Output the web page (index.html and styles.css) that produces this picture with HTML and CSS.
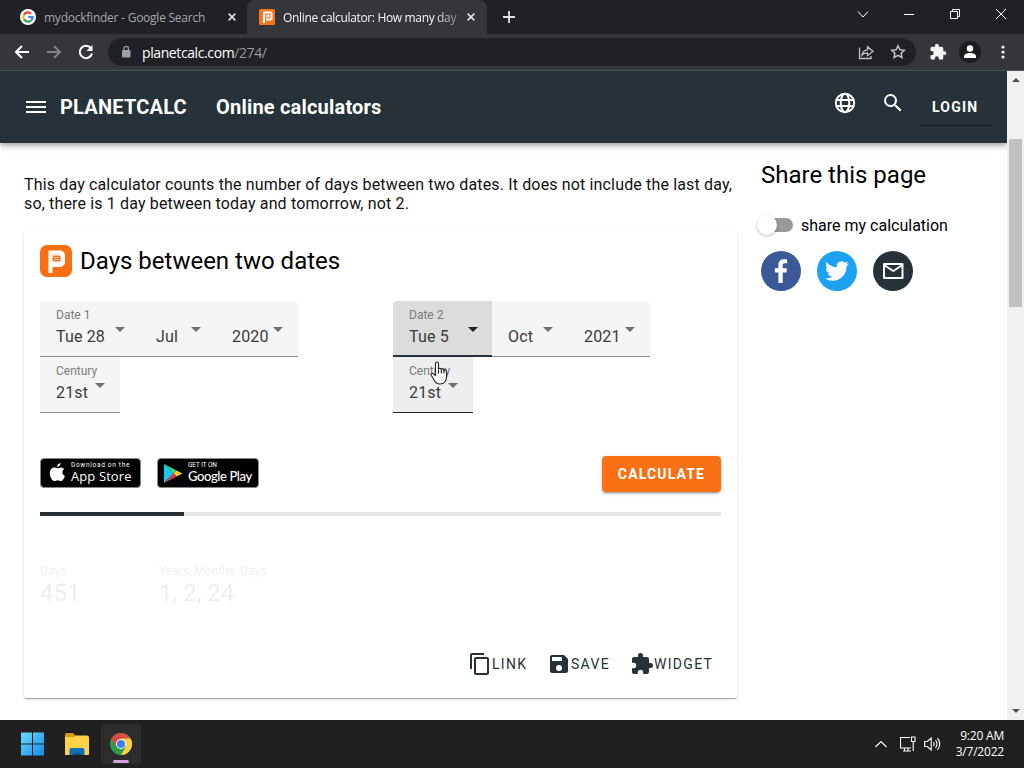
FILE: index.html
```html
<!DOCTYPE html>
<html lang="en">
<head>
    <meta charset="UTF-8">
    <meta name="viewport" content="width=device-width, initial-scale=1.0">
    <title>Online calculator: How many days between two dates</title>
    <link rel="stylesheet" href="styles.css">
</head>
<body>
    <!-- Browser tabs -->
    <div class="tabs">
        <div class="tab">
            <svg class="favicon" width="16" height="16" viewBox="0 0 16 16">
                <circle cx="8" cy="8" r="8" fill="#fff"/>
                <g fill="none" stroke-width="2.2">
                    <path d="M11.3 4.7A4.7 4.7 0 0 0 4 5.6" stroke="#ea4335"/>
                    <path d="M4 5.6a4.7 4.7 0 0 0 0 4.8" stroke="#fbbc05"/>
                    <path d="M4 10.4a4.7 4.7 0 0 0 7 1.2" stroke="#34a853"/>
                    <path d="M11 11.6A4.7 4.7 0 0 0 12.7 8H8.2" stroke="#4285f4"/>
                </g>
            </svg>
            <span class="tab-title google">mydockfinder - Google Search</span>
            <svg class="tab-close" width="8" height="8" viewBox="0 0 8 8"><path d="M.6.6l6.8 6.8M7.4.6L.6 7.4"/></svg>
        </div>
        <div class="tab active">
            <svg class="favicon" width="16" height="16" viewBox="0 0 32 32">
                <rect width="32" height="32" rx="3" fill="#f47721"/>
                <path d="M10 28V7h13a2 2 0 0 1 2 2v10a2 2 0 0 1-2 2h-9" fill="none" stroke="#fff" stroke-width="4"/>
                <path d="M15 12h5v4h-5z" fill="none" stroke="#fff" stroke-width="2"/>
            </svg>
            <span class="tab-title calc">Online calculator: How many day</span>
            <svg class="tab-close" width="8" height="8" viewBox="0 0 8 8"><path d="M.6.6l6.8 6.8M7.4.6L.6 7.4"/></svg>
        </div>
        <svg class="new-tab" width="12" height="12" viewBox="0 0 12 12"><path d="M6 0v12M0 6h12"/></svg>
        <div class="window-buttons">
            <svg width="12" height="12" viewBox="0 0 12 12"><path d="M1 3.5L6 9l5-5.5"/></svg>
            <svg width="12" height="12" viewBox="0 0 12 12"><path d="M1 6.5h10"/></svg>
            <svg width="12" height="12" viewBox="0 0 12 12"><path d="M1.5 3.5h7v7h-7zM3.5 3.5v-2h7v7h-2"/></svg>
            <svg width="12" height="12" viewBox="0 0 12 12"><path d="M1 1l10 10M11 1L1 11"/></svg>
        </div>
    </div>

    <!-- Address bar -->
    <div class="toolbar">
        <svg class="nav-icon" width="16" height="16" viewBox="0 0 16 16"><path d="M15 8H2M8 2L2 8l6 6"/></svg>
        <svg class="nav-icon disabled" width="16" height="16" viewBox="0 0 16 16"><path d="M1 8h13M8 2l6 6-6 6"/></svg>
        <svg class="nav-icon" width="16" height="16" viewBox="0 0 16 16"><path d="M12.8 4A6.2 6.2 0 1 0 14 9.4"/><path d="M14.5 1v6h-6z" class="solid"/></svg>
        <div class="address">
            <svg width="10" height="14" viewBox="0 0 10 14"><rect x="1" y="5" width="8.5" height="7.5" rx="1" fill="#9aa0a6"/><path d="M3 5.5V3.6a2.2 2.2 0 0 1 4.4 0v1.9" fill="none" stroke="#9aa0a6" stroke-width="1.3"/></svg>
            <span class="url">planetcalc.com<span class="path">/274/</span></span>
            <svg class="share-icon" width="16" height="16" viewBox="0 0 16 16"><path d="M1.500 3.500v11h11.500V12"/><path d="M4 11c.4-3.400 2.500-5 5.500-5.200V2.700l5.500 4.500-5.500 4.500V8.800C7 8.800 5.300 9.400 4 11z"/></svg>
            <svg class="star-icon" width="16" height="16" viewBox="0 0 16 16"><path d="M8 1.700l1.900 4 4.400.5-3.200 3 .8 4.300L8 11.400l-3.900 2.100.8-4.300-3.200-3 4.400-.5z"/></svg>
        </div>
        <svg class="extension" width="18" height="18" viewBox="0 0 24 24"><path d="M20.500 11H19V7a2 2 0 0 0-2-2h-4V3.500a2.500 2.500 0 0 0-5 0V5H4a2 2 0 0 0-2 2v3.800h1.500a2.700 2.700 0 0 1 0 5.400H2V20c0 1.100.9 2 2 2h3.800v-1.500a2.700 2.700 0 0 1 5.400 0V22H17a2 2 0 0 0 2-2v-4h1.500a2.500 2.500 0 0 0 0-5z"/></svg>
        <svg class="profile" width="22" height="22" viewBox="0 0 22 22"><circle cx="11" cy="11" r="11" fill="#1b1c1f"/><circle cx="11" cy="7.500" r="3.200" fill="#fff"/><path d="M5 17v-1.500c0-2.500 3-3.500 6-3.500s6 1 6 3.500V17z" fill="#fff"/></svg>
        <svg class="more" width="4" height="14" viewBox="0 0 4 14"><circle cx="2" cy="2" r="1.600"/><circle cx="2" cy="7" r="1.600"/><circle cx="2" cy="12" r="1.600"/></svg>
    </div>

    <div class="viewport">
        <div class="page">
            <header class="header">
                <svg class="menu-icon" width="20" height="14" viewBox="0 0 20 14"><path d="M0 2h20M0 7h20M0 12h20"/></svg>
                <a class="brand">PLANETCALC</a>
                <a class="section">Online calculators</a>
                <svg class="globe" width="24" height="24" viewBox="0 0 24 24"><circle cx="12" cy="12" r="9.200"/><ellipse cx="12" cy="12" rx="4.300" ry="9.200"/><path d="M3.500 9h17M3.500 15h17"/></svg>
                <svg class="search" width="24" height="24" viewBox="0 0 24 24"><path d="M15.500 14h-.79l-.28-.27A6.471 6.471 0 0 0 16 9.500 6.500 6.500 0 1 0 9.500 16c1.610 0 3.090-.59 4.230-1.570l.27.28v.79l5 4.990L20.490 19l-4.990-5zm-6 0C7.010 14 5 11.990 5 9.500S7.010 5 9.500 5 14 7.010 14 9.500 11.990 14 9.500 14z"/></svg>
                <a class="login">LOGIN</a>
            </header>

            <div class="content">
                <main class="main">
                    <p class="intro">This day calculator counts the number of days between two dates. It does not include the last day, so, there is 1 day between today and tomorrow, not 2.</p>

                    <div class="card">
                        <div class="card-title">
                            <svg width="32" height="32" viewBox="0 0 32 32">
                                <rect width="32" height="32" rx="7" fill="#fa6f12"/>
                                <path d="M10.500 28V7.500H20a3 3 0 0 1 3 3V17a3 3 0 0 1-3 3h-8" fill="none" stroke="#fff" stroke-width="4"/>
                                <rect x="12.500" y="9.500" width="8.500" height="8.500" fill="#fff"/>
                                <rect x="13" y="10.500" width="7.500" height="6" rx="1.500" fill="#fa6f12"/>
                                <path d="M14.500 12.500h4.500M14.500 14.500h4.500" stroke="#ffd9bd"/>
                            </svg>
                            <h2>Days between two dates</h2>
                        </div>

                        <div class="dates">
                            <div class="date-group">
                                <div class="selects">
                                    <div class="select day"><label>Date 1</label><div class="value">Tue 28<i class="arrow"></i></div></div>
                                    <div class="select month"><label></label><div class="value">Jul<i class="arrow"></i></div></div>
                                    <div class="select year"><label></label><div class="value">2020<i class="arrow"></i></div></div>
                                </div>
                                <div class="select century"><label>Century</label><div class="value">21st<i class="arrow"></i></div></div>
                            </div>
                            <div class="date-group">
                                <div class="selects">
                                    <div class="select day focused"><label>Date 2</label><div class="value">Tue 5<i class="arrow"></i></div></div>
                                    <div class="select month"><label></label><div class="value">Oct<i class="arrow"></i></div></div>
                                    <div class="select year"><label></label><div class="value">2021<i class="arrow"></i></div></div>
                                </div>
                                <div class="select century hovered"><label>Century</label><div class="value">21st<i class="arrow"></i></div>
                                    <svg class="cursor" width="18" height="24" viewBox="0 0 18 24"><path d="M5.500 14.500V2.500c0-2 3-2 3 0v5.800c.4-1.500 2.800-1.200 2.800.4.600-1.200 2.700-.8 2.700.7.700-1 2.500-.5 2.500 1V15c0 5-2.500 8-6.500 8-3 0-4.800-1.600-6-4.200L1.200 14.200c-.6-1.400 1-2.600 2.100-1.400z"/><path d="M8.500 8.500v4M11.300 9v3.500M14 9.600v3"/></svg>
                                </div>
                            </div>
                        </div>

                        <div class="run">
                            <a class="store">
                                <svg width="17" height="20" viewBox="0 0 17 20"><path d="M11.600 0c.1 1.900-1.600 3.800-3.500 3.900C7.900 2 9.700.2 11.600 0zM8.500 5.300c.8 0 1.900-.9 3.500-.9 1.500.1 2.600.7 3.300 1.700-2.800 1.800-2.300 5.600.6 6.800-.9 2.600-2.400 5.100-4.100 5.100-1.200 0-1.700-.8-3.200-.8s-2 .8-3.200.8C3 18 .8 13.600.8 10.300c0-3.700 2.300-5.700 4.600-5.700 1.400 0 2.300.7 3.100.7z" fill="#fff"/></svg>
                                <span class="store-text apple"><small>Download on the</small><b>App Store</b></span>
                            </a>
                            <a class="store google-play">
                                <svg width="19" height="21" viewBox="0 0 19 21"><path d="M0 1v19l9.500-9.500z" fill="#18c8ee"/><path d="M0 1l12.500 6.500-3 3z" fill="#35df83"/><path d="M12.500 7.500l6 3-6 3-3-3z" fill="#ffc928"/><path d="M0 20l9.500-9.500 3 3z" fill="#ed3950"/></svg>
                                <span class="store-text play"><small>GET IT ON</small><b>Google Play</b></span>
                            </a>
                            <button class="calculate">CALCULATE</button>
                        </div>

                        <div class="progress"><div class="bar"></div></div>

                        <div class="results">
                            <div class="result"><span>Days</span><strong>451</strong></div>
                            <div class="result"><span>Years, Months, Days</span><strong>1, 2, 24</strong></div>
                        </div>

                        <div class="actions">
                            <a class="action link"><svg width="24" height="24" viewBox="0 0 24 24"><path d="M16 1H4a2 2 0 0 0-2 2v14h2V3h12V1zm3 4H8a2 2 0 0 0-2 2v14c0 1.100.9 2 2 2h11a2 2 0 0 0 2-2V7a2 2 0 0 0-2-2zm0 16H8V7h11v14z"/></svg>LINK</a>
                            <a class="action save"><svg width="24" height="24" viewBox="0 0 24 24"><path d="M17 3H5a2 2 0 0 0-2 2v14c0 1.100.89 2 2 2h14c1.100 0 2-.9 2-2V7l-4-4zm-5 16a3 3 0 1 1 0-6 3 3 0 0 1 0 6zm3-10H5V5h10v4z"/></svg>SAVE</a>
                            <a class="action widget"><svg width="24" height="24" viewBox="0 0 24 24"><path d="M20.500 11H19V7a2 2 0 0 0-2-2h-4V3.500a2.500 2.500 0 0 0-5 0V5H4a2 2 0 0 0-2 2v3.800h1.500a2.700 2.700 0 0 1 0 5.400H2V20c0 1.100.9 2 2 2h3.800v-1.500a2.700 2.700 0 0 1 5.400 0V22H17a2 2 0 0 0 2-2v-4h1.500a2.500 2.500 0 0 0 0-5z"/></svg>WIDGET</a>
                        </div>
                    </div>
                </main>

                <aside class="sidebar">
                    <h2>Share this page</h2>
                    <div class="share-toggle">
                        <span class="switch"><span class="knob"></span></span>
                        <span>share my calculation</span>
                    </div>
                    <div class="socials">
                        <svg width="40" height="40" viewBox="0 0 40 40"><circle cx="20" cy="20" r="20" fill="#3b5998"/><path d="M17.400 32V21.500h-3.500v-4.200h3.500v-3.400c0-3.700 2.200-5.700 5.400-5.700 1.600 0 2.900.1 3.300.2v3.800h-2.300c-1.800 0-2.100.9-2.100 2.100v3h4.200l-.5 4.200h-3.700V32z" fill="#fff"/></svg>
                        <svg width="40" height="40" viewBox="0 0 40 40"><circle cx="20" cy="20" r="20" fill="#1da1f2"/><path transform="translate(8 8)" d="M23.950 4.570a10 10 0 0 1-2.820.770 4.960 4.960 0 0 0 2.160-2.720c-.950.550-2 .950-3.130 1.180a4.920 4.920 0 0 0-8.380 4.480C7.690 8.090 4.070 6.130 1.640 3.160a4.820 4.820 0 0 0-.670 2.480c0 1.710.870 3.210 2.190 4.100a4.900 4.900 0 0 1-2.230-.620v.060a4.920 4.920 0 0 0 3.950 4.830 5 5 0 0 1-2.210.080 4.940 4.940 0 0 0 4.600 3.420A9.870 9.870 0 0 1 0 19.540a14 14 0 0 0 7.550 2.210c9.050 0 14-7.500 14-13.980l-.020-.640a9.940 9.940 0 0 0 2.420-2.560z" fill="#fff"/></svg>
                        <svg width="40" height="40" viewBox="0 0 40 40"><circle cx="20" cy="20" r="20" fill="#263238"/><path d="M11 13h18.500v14H11zM11 14l9.250 6 9.250-6" fill="none" stroke="#fff" stroke-width="2" stroke-linejoin="round"/></svg>
                    </div>
                </aside>
            </div>
        </div>

        <div class="scrollbar">
            <span class="scroll-up"></span>
            <div class="thumb"></div>
            <span class="scroll-down"></span>
        </div>
    </div>

    <!-- Windows taskbar -->
    <footer class="taskbar">
        <svg class="start" width="24" height="24" viewBox="0 0 24 24">
            <defs><linearGradient id="win" x1="0" y1="0" x2="1" y2="1"><stop offset="0" stop-color="#6fdcfd"/><stop offset="1" stop-color="#0f8ce8"/></linearGradient></defs>
            <path d="M0 .5h11v11H0zM12 .5h11v11H12zM0 12.500h11v11H0zM12 12.500h11v11H12z" fill="url(#win)"/>
        </svg>
        <svg class="explorer" width="26" height="23" viewBox="0 0 26 23">
            <path d="M1 2a2 2 0 0 1 2-2h6l3 3v2H1z" fill="#d99b15"/>
            <path d="M1 4h9l2-1.500h11a2 2 0 0 1 2 2V21a1 1 0 0 1-1 1H1z" fill="#ffd24a"/>
            <path d="M5.500 22v-5a2 2 0 0 1 2-2h11a2 2 0 0 1 2 2v5z" fill="#0f70b8"/>
            <path d="M9 22v-2h8v2z" fill="#0a528c"/>
        </svg>
        <div class="running">
            <svg width="22" height="22" viewBox="0 0 22 22">
                <circle cx="11" cy="11" r="11" fill="#2d9c4c"/>
                <path d="M1.470 5.500A11 11 0 0 1 20.530 5.500H11L6.240 13.750z" fill="#dd4b3e"/>
                <path d="M20.530 5.500A11 11 0 0 1 11 22l4.760-8.250L11 5.500z" fill="#fdcf45"/>
                <circle cx="11" cy="11" r="5" fill="#fff"/><circle cx="11" cy="11" r="4" fill="#3f7de8"/>
            </svg>
            <span class="indicator"></span>
        </div>
        <div class="tray">
            <svg width="12" height="8" viewBox="0 0 12 8"><path d="M.5 7L6 1.500 11.500 7"/></svg>
            <svg width="16" height="16" viewBox="0 0 16 16"><path d="M10 1.500H.5v10.500H11M4.500 12v3M8 12v3M3 15h8M11.500 1h3.500v4.500h-3.500zM13.200 5.500V15"/></svg>
            <svg width="17" height="14" viewBox="0 0 17 14"><path d="M.7 4.500v5h2.600L7.200 13V1L3.300 4.500zM9.500 5q1.400 2 0 4M11.500 3q3 4 0 8M13.500 1.200q4.500 5.800 0 11.600"/></svg>
        </div>
        <div class="clock"><span class="time">9:20 AM</span><span class="date">3/7/2022</span></div>
    </footer>
</body>
</html>
```
FILE: styles.css
```css
* {
    margin: 0;
    padding: 0;
    box-sizing: border-box;
}

body {
    width: 1024px;
    height: 768px;
    overflow: hidden;
    display: flex;
    flex-direction: column;
    background: #fff;
    color: #000;
    font-family: Roboto, sans-serif;
    font-size: 16px;
}

svg {
    display: block;
    flex-shrink: 0;
}

/* Browser */
.tabs {
    display: flex;
    align-items: center;
    height: 34px;
    background: #202124;
    font-family: "Open Sans", "Noto Sans", sans-serif;
    font-size: 12px;
}

.tab {
    display: flex;
    align-items: center;
    width: 247px;
    height: 34px;
    padding-left: 20px;
    color: #a4a7ab;
}

.tab.active {
    width: 240px;
    padding-left: 12px;
    background: #35363a;
    border-radius: 8px 8px 0 0;
    color: #f1f3f4;
}

.tab-title {
    width: 172px;
    margin-left: 8px;
    margin-right: 12px;
    white-space: nowrap;
}

.active .tab-title {
    width: 174px;
    margin-right: 10px;
    -webkit-mask-image: linear-gradient(to right, #000 150px, transparent 190px);
}

.google {
    letter-spacing: -0.24px;
}

.calc {
    letter-spacing: -0.34px;
}

.tab-close {
    fill: none;
    stroke: #dee1e6;
    stroke-width: 1.6;
}

.new-tab {
    margin-left: 16px;
    fill: none;
    stroke: #dee1e6;
    stroke-width: 1.8;
}

.window-buttons {
    display: flex;
    gap: 34px;
    margin-left: auto;
    margin-right: 17px;
    padding-bottom: 6px;
    fill: none;
    stroke: #fff;
    stroke-width: 1;
}

.toolbar {
    display: flex;
    align-items: center;
    height: 37px;
    padding: 0 19px 0 14px;
    background: #35363a;
    border-bottom: 1px solid #505157;
}

.nav-icon {
    margin-right: 16px;
    fill: none;
    stroke: #fff;
    stroke-width: 2;
}

.nav-icon.disabled {
    stroke: #818286;
}

.nav-icon .solid {
    fill: #fff;
    stroke: none;
}

.address {
    display: flex;
    align-items: center;
    width: 808px;
    height: 28px;
    margin-left: -2px;
    padding: 0 10px 0 13px;
    border-radius: 14px;
    background: #202124;
    flex-shrink: 0;
}

.url {
    flex: 1;
    margin-left: 11px;
    color: #fff;
    font-family: "Open Sans", "Noto Sans", sans-serif;
    font-size: 14px;
    letter-spacing: -0.4px;
}

.path {
    color: #969a9f;
}

.share-icon,
.star-icon {
    fill: none;
    stroke: #bfc2c7;
    stroke-width: 1.3;
}

.share-icon {
    margin-right: 16px;
}

.star-icon {
    stroke-width: 1.5;
}

.extension {
    margin-left: 13px;
    fill: #f1f3f4;
}

.profile {
    margin-left: 12px;
}

.more {
    margin-left: 20px;
    fill: #f1f3f4;
}

/* Page */
.viewport {
    display: flex;
    height: 649px;
    overflow: hidden;
}

.page {
    width: 1007px;
    background: #fff;
    overflow: hidden;
}

.header {
    display: flex;
    align-items: center;
    height: 72px;
    padding: 0 15px 0 26px;
    background: #263238;
    color: #fff;
    box-shadow: 0 2px 4px -1px rgba(0, 0, 0, 0.2), 0 4px 5px rgba(0, 0, 0, 0.14), 0 1px 10px rgba(0, 0, 0, 0.12);
}

.menu-icon {
    stroke: #fff;
    stroke-width: 2;
}

.brand,
.section {
    font-size: 20px;
    font-weight: 700;
    letter-spacing: 0.2px;
}

.brand {
    width: 156px;
    margin-left: 14px;
}

.globe {
    margin: -8px 24px 0 auto;
    fill: none;
    stroke: #fff;
    stroke-width: 2;
}

.search {
    margin-top: -8px;
    margin-right: 14px;
    fill: #fff;
}

.login {
    width: 73px;
    height: 37px;
    padding-left: 13px;
    border-bottom: 1px solid #172024;
    font-size: 14px;
    font-weight: 700;
    letter-spacing: 1.2px;
    line-height: 36px;
}

.content {
    display: flex;
    gap: 24px;
    padding: 0 24px;
}

.main {
    width: 713px;
}

.intro {
    margin-top: 32px;
    line-height: 19px;
    letter-spacing: 0.15px;
    color: #111;
}

.card {
    height: 467px;
    margin-top: 18px;
    padding: 14px 16px 0;
    border-radius: 2px;
    box-shadow: 0 2px 1px -1px rgba(0, 0, 0, 0.2), 0 1px 1px rgba(0, 0, 0, 0.14), 0 1px 3px rgba(0, 0, 0, 0.12);
}

.card-title {
    display: flex;
    align-items: center;
    gap: 8px;
}

h2 {
    font-size: 24px;
    font-weight: 400;
    line-height: 32px;
}

.dates {
    display: grid;
    grid-template-columns: 353px 1fr;
    margin-top: 24px;
}

.selects {
    display: flex;
}

.select {
    height: 56px;
    padding: 6px 15px 0 16px;
    background: #f5f5f5;
    border-bottom: 1px solid #8d8d8d;
}

.select label {
    display: block;
    height: 16px;
    color: #7b7b7b;
    font-size: 12px;
    line-height: 16px;
}

.value {
    display: flex;
    justify-content: space-between;
    align-items: flex-start;
    color: #3a3a3a;
    line-height: 28px;
    letter-spacing: 0.15px;
}

.arrow {
    margin-top: 4px;
    border: 5px solid transparent;
    border-top-color: #707070;
    border-bottom: 0;
}

.day {
    width: 100px;
    border-top-left-radius: 4px;
}

.month {
    width: 76px;
}

.year {
    width: 82px;
    border-top-right-radius: 4px;
}

.century {
    width: 80px;
}

.focused {
    width: 99px;
    padding-right: 14px;
    background: #dcdcdc;
    border-bottom: 2px solid #263238;
}

.focused .arrow {
    border-top-color: #222;
}

.hovered {
    position: relative;
    background: #eee;
    border-bottom-color: #222;
}

/* Hand pointer over the century field */
.cursor {
    position: absolute;
    left: 37px;
    top: 4px;
    fill: #fff;
    stroke: #222;
    stroke-width: 1.1;
}

.run {
    display: flex;
    align-items: center;
    height: 36px;
    margin-top: 43px;
}

.store {
    display: flex;
    align-items: center;
    width: 101px;
    height: 30px;
    margin-right: 16px;
    padding-left: 8px;
    border: 1px solid #888;
    border-radius: 4px;
    background: #000;
    color: #fff;
    margin-top: -2px;
}

.google-play {
    width: 102px;
    padding-left: 6px;
}

.store-text {
    display: flex;
    flex-direction: column;
    margin-left: 5px;
    white-space: nowrap;
}

.store-text small {
    font-size: 6.5px;
    line-height: 7px;
    letter-spacing: 0.7px;
}

.store-text b {
    font-family: "Open Sans", sans-serif;
    font-size: 13px;
    font-weight: 500;
    line-height: 15px;
    letter-spacing: 0.1px;
}

.play small {
    letter-spacing: -0.1px;
}

.play b {
    font-family: Lato, sans-serif;
    font-size: 13px;
    letter-spacing: -0.4px;
}

.calculate {
    width: 119px;
    height: 36px;
    margin-left: auto;
    border: 0;
    border-radius: 4px;
    background: #fa7014;
    color: #fff;
    font-family: Roboto, sans-serif;
    font-size: 14px;
    font-weight: 700;
    letter-spacing: 1.15px;
    box-shadow: 0 3px 1px -2px rgba(0, 0, 0, 0.2), 0 2px 2px rgba(0, 0, 0, 0.14), 0 1px 5px rgba(0, 0, 0, 0.12);
}

.progress {
    height: 4px;
    margin-top: 20px;
    background: #e6e6e6;
}

.bar {
    width: 144px;
    height: 4px;
    background: #263238;
}

/* Old results fade out while the new ones load */
.results {
    display: flex;
    height: 83px;
    margin-top: 47px;
    opacity: 0.07;
}

.result {
    width: 119px;
    white-space: nowrap;
}

.result span {
    display: block;
    font-size: 12px;
    line-height: 16px;
}

.result strong {
    display: block;
    font-size: 24px;
    font-weight: 400;
    line-height: 28px;
}

.actions {
    display: flex;
    align-items: center;
    height: 36px;
    padding-left: 428px;
}

.action {
    display: flex;
    align-items: center;
    color: #263238;
    fill: #263238;
    font-size: 14px;
    letter-spacing: 1.3px;
}

.link {
    width: 79px;
}

.save {
    width: 83px;
}

/* Share column */
.sidebar {
    padding-top: 16px;
}

.share-toggle {
    display: flex;
    align-items: center;
    height: 20px;
    margin-top: 24px;
}

.switch {
    display: flex;
    align-items: center;
    width: 32px;
    height: 14px;
    margin-right: 8px;
    border-radius: 7px;
    background: #9a9a9a;
}

.knob {
    width: 20px;
    height: 20px;
    margin-left: -4px;
    border-radius: 50%;
    background: #fff;
    box-shadow: 0 1px 3px rgba(0, 0, 0, 0.3);
}

.socials {
    display: flex;
    gap: 16px;
    margin-top: 16px;
}

.scrollbar {
    display: flex;
    flex-direction: column;
    align-items: center;
    width: 17px;
    background: #f1f1f1;
}

.scroll-up,
.scroll-down {
    border: 4px solid transparent;
}

.scroll-up {
    margin-top: 7px;
    border-top: 0;
    border-bottom-color: #505050;
}

.thumb {
    width: 13px;
    height: 168px;
    margin-top: 57px;
    background: #c1c1c1;
}

.scroll-down {
    margin-top: auto;
    margin-bottom: 7px;
    border-bottom: 0;
    border-top-color: #505050;
}

/* Taskbar */
.taskbar {
    display: flex;
    align-items: center;
    height: 48px;
    padding: 0 20px 0 21px;
    background: #202020;
    color: #fff;
    font-family: "Open Sans", "Noto Sans", sans-serif;
    font-size: 12px;
}

.explorer {
    margin-left: 19px;
}

.running {
    display: flex;
    flex-direction: column;
    align-items: center;
    width: 40px;
    height: 40px;
    margin-left: 11px;
    padding-top: 9px;
    border-radius: 4px;
    background: #2c2c2c;
}

.indicator {
    width: 16px;
    height: 3px;
    margin-top: 5px;
    border-radius: 2px;
    background: #d3a3df;
}

.tray {
    display: flex;
    align-items: center;
    gap: 8px;
    margin-left: auto;
    margin-right: 15px;
}

.tray svg {
    fill: none;
    stroke: #fff;
    stroke-width: 1.1;
}

.tray svg:first-child {
    margin-right: 5px;
}

.clock {
    display: flex;
    flex-direction: column;
    align-items: flex-end;
    line-height: 16px;
    letter-spacing: -0.2px;
}
```
